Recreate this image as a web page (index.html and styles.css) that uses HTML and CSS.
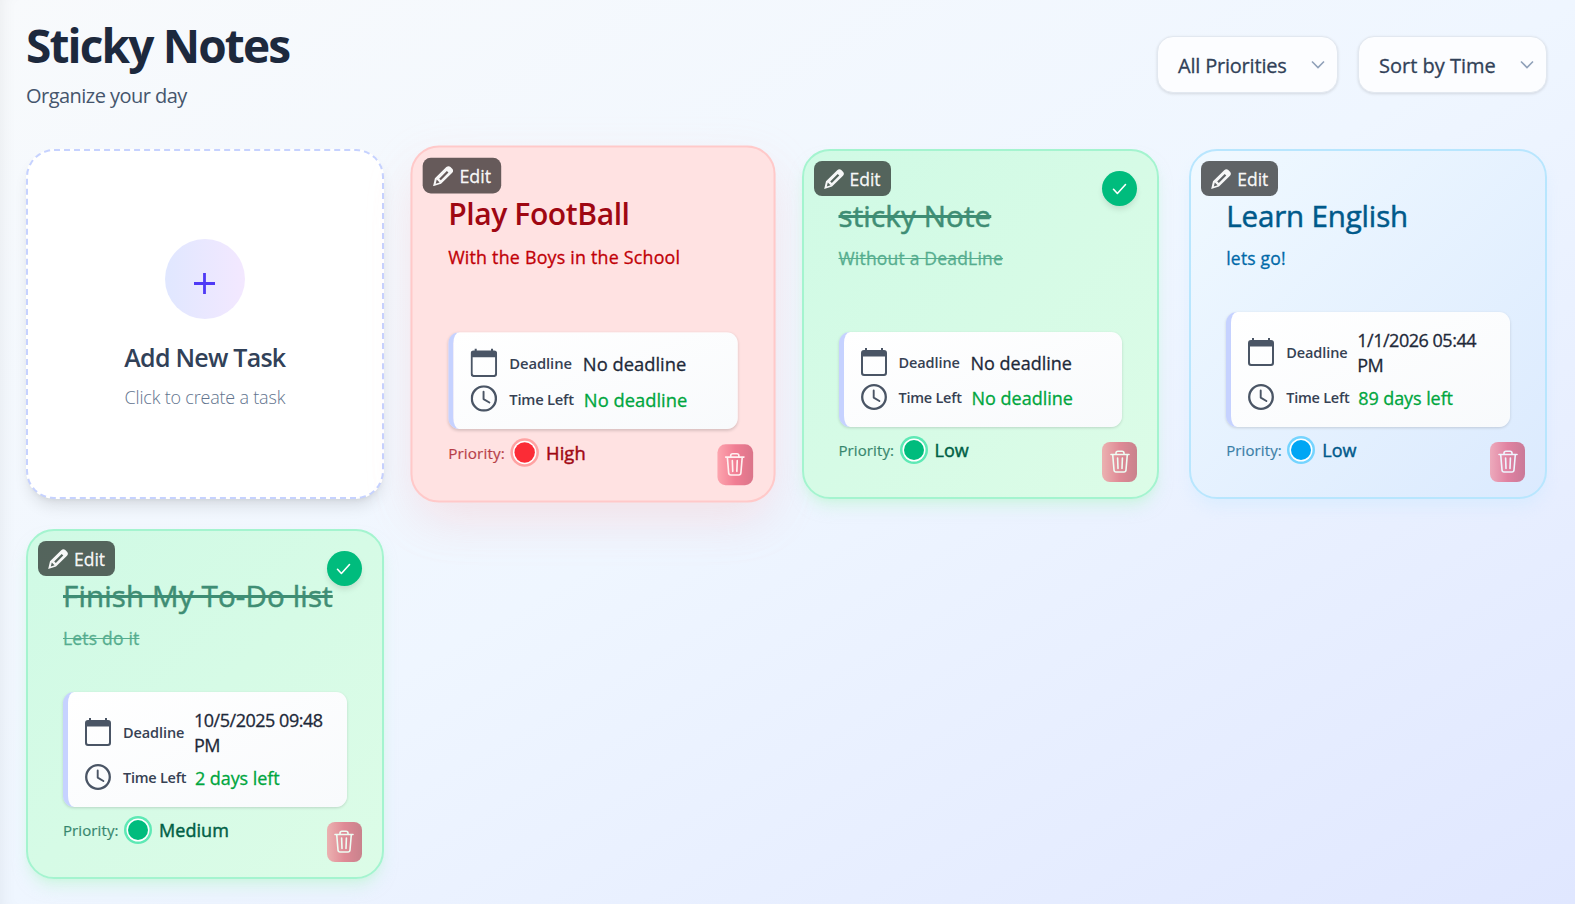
FILE: index.html
```html
<!DOCTYPE html>
<html lang="en">
<head>
<meta charset="utf-8">
<title>Sticky Notes</title>
<link rel="stylesheet" href="styles.css">
</head>
<body>
<svg class="sprite" aria-hidden="true">
  <symbol id="pencil" viewBox="0 0 20 20">
    <path fill="currentColor" fill-rule="evenodd" d="M13.200 1.200C14.400 0 16.200 0 17.300 1L19 2.700C20.200 3.900 20.200 5.600 19 6.800L8 17.500L.2 20L2 12.200ZM3.800 13.400L2.800 17.400L6.600 16.200ZM6.200 12.500L13.700 5L15.300 6.500L7.800 14Z"/>
  </symbol>
  <symbol id="calendar" viewBox="0 0 26 28">
    <path fill="currentColor" fill-rule="evenodd" d="M4 0H6V2H20V0H22V2H23Q26 2 26 5V25Q26 28 23 28H3Q0 28 0 25V5Q0 2 3 2H4ZM2 8.500V24.500Q2 26 3.500 26H22.500Q24 26 24 24.500V8.500Z"/>
  </symbol>
  <symbol id="clock" viewBox="0 0 26 26">
    <g fill="none" stroke="currentColor" stroke-width="2.300" stroke-linecap="round" stroke-linejoin="round"><circle cx="13" cy="13" r="11.800"/><path stroke-width="1.900" d="M12.700 6.500V13.600L18.400 17"/></g>
  </symbol>
  <symbol id="check" viewBox="0 0 16 12">
    <path fill="none" stroke="currentColor" stroke-width="1.600" stroke-linecap="round" stroke-linejoin="round" d="M1.500 6.300L5.400 10.500L13.500 1.500"/>
  </symbol>
  <symbol id="trash" viewBox="0 0 20 24">
    <g fill="none" stroke="currentColor" stroke-width="1.600" stroke-linecap="round" stroke-linejoin="round"><path d="M1 4.500H19M2.700 4.500L4 20Q4.200 22 6 22H14Q15.800 22 16 20L17.300 4.500M6 4V3Q6 1.200 8 1.200H12Q14 1.200 14 3V4M7.600 8L8 18.500M12.400 8L12 18.500"/></g>
  </symbol>
</svg>
<main class="page">
  <header class="header">
    <div>
      <h1 class="page-title">Sticky Notes</h1>
      <p class="page-subtitle">Organize your day</p>
    </div>
    <div class="filters">
      <button class="select select-priority"><span>All Priorities</span><svg class="chevron" viewBox="0 0 14 9"><path d="M1 1.500L7 7.500L13 1.500"/></svg></button>
      <button class="select select-sort"><span>Sort by Time</span><svg class="chevron" viewBox="0 0 14 9"><path d="M1 1.500L7 7.500L13 1.500"/></svg></button>
    </div>
  </header>
  <section class="grid">
    <div class="add-card">
      <div class="add-circle"><svg class="plus" viewBox="0 0 21 21"><path d="M10.500 0V21M0 10.500H21"/></svg></div>
      <h2 class="add-title">Add New Task</h2>
      <p class="add-hint">Click to create a task</p>
    </div>

    <article class="note note-red note-hover">
      <button class="edit"><svg><use href="#pencil"/></svg><span>Edit</span></button>
      <h3 class="note-title title-strong">Play FootBall</h3>
      <p class="note-desc">With the Boys in the School</p>
      <div class="info">
        <div class="row"><svg class="cal"><use href="#calendar"/></svg><span class="label label-deadline">Deadline</span><span class="value">No deadline</span></div>
        <div class="row"><svg class="clk"><use href="#clock"/></svg><span class="label">Time Left</span><span class="value left">No deadline</span></div>
      </div>
      <div class="priority"><span class="plabel">Priority:</span><i class="dot"></i><span class="pvalue">High</span></div>
      <button class="trash"><svg><use href="#trash"/></svg></button>
    </article>

    <article class="note note-green done">
      <button class="edit"><svg><use href="#pencil"/></svg><span>Edit</span></button>
      <span class="tick"><svg><use href="#check"/></svg></span>
      <h3 class="note-title title-loose">sticky Note</h3>
      <p class="note-desc">Without a DeadLine</p>
      <div class="info">
        <div class="row"><svg class="cal"><use href="#calendar"/></svg><span class="label label-deadline">Deadline</span><span class="value">No deadline</span></div>
        <div class="row"><svg class="clk"><use href="#clock"/></svg><span class="label">Time Left</span><span class="value left">No deadline</span></div>
      </div>
      <div class="priority"><span class="plabel">Priority:</span><i class="dot"></i><span class="pvalue">Low</span></div>
      <button class="trash"><svg><use href="#trash"/></svg></button>
    </article>

    <article class="note note-blue">
      <button class="edit"><svg><use href="#pencil"/></svg><span>Edit</span></button>
      <h3 class="note-title">Learn English</h3>
      <p class="note-desc">lets go!</p>
      <div class="info tall">
        <div class="row"><svg class="cal"><use href="#calendar"/></svg><span class="label label-deadline">Deadline</span><span class="value date">1/1/2026 05:44<br>PM</span></div>
        <div class="row"><svg class="clk"><use href="#clock"/></svg><span class="label">Time Left</span><span class="value left">89 days left</span></div>
      </div>
      <div class="priority"><span class="plabel">Priority:</span><i class="dot"></i><span class="pvalue">Low</span></div>
      <button class="trash"><svg><use href="#trash"/></svg></button>
    </article>

    <article class="note note-green done">
      <button class="edit"><svg><use href="#pencil"/></svg><span>Edit</span></button>
      <span class="tick"><svg><use href="#check"/></svg></span>
      <h3 class="note-title title-loose">Finish My To-Do list</h3>
      <p class="note-desc">Lets do it</p>
      <div class="info tall">
        <div class="row"><svg class="cal"><use href="#calendar"/></svg><span class="label label-deadline">Deadline</span><span class="value date">10/5/2025 09:48<br>PM</span></div>
        <div class="row"><svg class="clk"><use href="#clock"/></svg><span class="label">Time Left</span><span class="value left">2 days left</span></div>
      </div>
      <div class="priority"><span class="plabel">Priority:</span><i class="dot"></i><span class="pvalue">Medium</span></div>
      <button class="trash"><svg><use href="#trash"/></svg></button>
    </article>
  </section>
</main>
</body>
</html>
```

FILE: styles.css
```css
* { box-sizing: border-box; margin: 0; }
html, body { height: 904px; overflow: hidden; }
body {
  font-family: "Open Sans", "Noto Sans", sans-serif;
  background: linear-gradient(to bottom right, #f8fafc, #eff6ff 50%, #e0e7ff);
  color: #1d293d;
}
button { font: inherit; border: 0; color: inherit; }
.sprite { display: none; }
.page {
  height: 904px;
  padding: 20px 28px 0 26px;
  box-shadow: inset 14px 0 18px -14px rgba(0, 0, 0, .07);
}
.header { display: flex; justify-content: space-between; height: 129px; }
.page-title { font-size: 46px; line-height: 50px; font-weight: 700; letter-spacing: -1.85px; white-space: nowrap; }
.page-subtitle { margin-top: 11px; font-size: 20px; line-height: 30px; color: #45556c; letter-spacing: -.53px; }
.filters { display: flex; gap: 20px; padding-top: 16px; }
.select {
  display: flex; align-items: center; justify-content: space-between;
  height: 57px; padding: 2px 12px 0 20px;
  border: 1px solid #e2e8f0; border-radius: 16px;
  background: #fcfdff; color: #314158;
  font-size: 20px; letter-spacing: 0; white-space: nowrap;
  -webkit-text-stroke: .3px;
  box-shadow: 0 1px 3px rgba(0, 0, 0, .12);
}
.select-priority { width: 181px; }
.select-priority span { letter-spacing: -.2px; }
.select-sort { width: 189px; }
.chevron { width: 14px; height: 9px; margin-top: -3px; fill: none; stroke: #90a1b9; stroke-width: 1.600; }

.grid { display: grid; grid-template-columns: repeat(4, minmax(0, 1fr)); grid-auto-rows: 350px; gap: 30px; }
.add-card {
  display: flex; flex-direction: column; align-items: center;
  padding-top: 88px; border: 2px dashed #c6d2ff; border-radius: 28px; background: #fff;
  box-shadow: 0 10px 15px -3px rgba(0, 0, 0, .1), 0 4px 6px -4px rgba(0, 0, 0, .1);
}
.add-circle {
  display: flex; justify-content: center; padding-top: 34px;
  width: 80px; height: 80px; border-radius: 50%;
  background: linear-gradient(to right, #e0e7ff, #f3e8ff);
}
.plus { width: 21px; height: 21px; margin-right: 1px; stroke: #4f39f6; stroke-width: 2.800; }
.add-title { margin-top: 21px; font-size: 25px; line-height: 34px; font-weight: 600; color: #314158; letter-spacing: -.75px; }
.add-hint { margin-top: 10px; font-size: 18px; line-height: 26px; font-weight: 300; color: #62748e; letter-spacing: -.2px; }

.note {
  position: relative; display: flex; flex-direction: column;
  padding: 45px 35px 31px; border: 2px solid; border-radius: 28px;
}
.note-hover { transform: scale(1.02); }
.note-red {
  --text: #9f0712; --desc: #c10007; --dot: #fb2c36; --ring: #ffa2a2;
  border-color: #ffc9c9; background: #ffe2e2;
  box-shadow: 0 25px 50px -12px rgba(255, 170, 170, .2), 0 16px 46px 0 rgba(255, 200, 200, .16);
}
.note-green {
  --text: #006045; --desc: #007a55; --dot: #00bc7d; --ring: #5ee9b5;
  border-color: #a4f4cf; background: linear-gradient(to bottom right, #d0fae5, #dcfce7);
  box-shadow: 0 10px 15px -3px rgba(185, 248, 207, .5), 0 4px 6px -4px rgba(185, 248, 207, .5);
}
.note-blue {
  --text: #00598a; --desc: #0069a8; --dot: #00a6f4; --ring: #74d4ff;
  border-color: #b8e6fe; background: linear-gradient(to bottom right, #f0f9ff, #dbeafe);
  box-shadow: 0 10px 15px -3px rgba(184, 230, 254, .3);
}
.edit {
  position: absolute; left: 10px; top: 10px;
  display: flex; align-items: center; gap: 6px;
  width: 77px; height: 35px; padding: 0 0 0 10px; border-radius: 8px;
  background: rgba(0, 0, 0, .6); color: rgba(255, 255, 255, .95);
  font-size: 17.500px; -webkit-text-stroke: .3px;
}
.edit svg { width: 20px; height: 20px; }
.tick {
  position: absolute; right: 20px; top: 20px;
  display: flex; align-items: center; justify-content: center;
  width: 35px; height: 35px; border-radius: 50%;
  background: #00bc7d; color: #fff; box-shadow: 0 4px 6px -1px rgba(0, 0, 0, .12);
}
.tick svg { width: 16px; height: 12px; }
.note-title {
  font-size: 29.500px; line-height: 40px; font-weight: 400; color: var(--text);
  letter-spacing: -.15px; white-space: nowrap; -webkit-text-stroke: .5px;
}
.title-strong { font-weight: 600; letter-spacing: -.42px; -webkit-text-stroke: 0; }
.title-loose { letter-spacing: .15px; text-decoration-thickness: 3px; }
.note-desc {
  margin-top: 9px; font-size: 17.500px; line-height: 26px; color: var(--desc);
  letter-spacing: .2px; white-space: nowrap; -webkit-text-stroke: .3px;
}
.done .note-title { text-decoration-line: line-through; opacity: .7; }
.done .note-desc { text-decoration: line-through; opacity: .6; }
.info {
  display: flex; flex-direction: column; justify-content: space-between;
  height: 95px; margin-top: auto; padding: 16px 12px 16px 17px;
  border-left: 5px solid #c6d2ff; border-radius: 11px;
  background: linear-gradient(to bottom right, #fff, #f8fafc);
  box-shadow: 0 1px 3px rgba(0, 0, 0, .15);
}
.info.tall { height: 115px; padding-top: 15px; padding-bottom: 16px; }
.row { display: flex; align-items: center; height: 28px; color: #4a5565; }
.tall .row:first-child { height: 50px; }
.row svg { flex: none; width: 26px; height: 28px; margin-right: 12px; }
.row .clk { height: 26px; }
.label { flex: none; width: 73px; padding-top: 1px; font-size: 14.500px; font-weight: 600; color: #364153; letter-spacing: -.25px; white-space: nowrap; }
.label-deadline { width: 72px; letter-spacing: -.1px; }
.value { padding-top: 3px; font-size: 18px; line-height: 25px; color: #1e2939; white-space: nowrap; -webkit-text-stroke: .3px; }
.value.date { padding-top: 2px; margin-left: -1px; letter-spacing: -.48px; }
.value.left { color: #00a63e; }
.tall .value.left { margin-left: -1px; letter-spacing: -.08px; }
.priority { display: flex; align-items: center; height: 32px; margin-top: 7px; color: var(--text); }
.plabel { width: 65px; font-size: 15px; opacity: .75; letter-spacing: .1px; -webkit-text-stroke: .2px; }
.dot {
  width: 20px; height: 20px; border-radius: 50%; background: var(--dot);
  box-shadow: 0 0 0 1.500px #fff, 0 0 0 4px var(--ring);
}
.pvalue { margin-left: 11px; font-size: 18px; letter-spacing: .05px; -webkit-text-stroke: .45px; }
.trash {
  position: absolute; right: 20px; bottom: 15px;
  display: flex; align-items: center; justify-content: center;
  width: 35px; height: 40px; padding: 0; border-radius: 8px; opacity: .5;
  background: linear-gradient(to right, #fc6a7c, #e41b47 50%, #b80a34); color: #fff;
}
.trash svg { width: 20px; height: 24px; }
```
